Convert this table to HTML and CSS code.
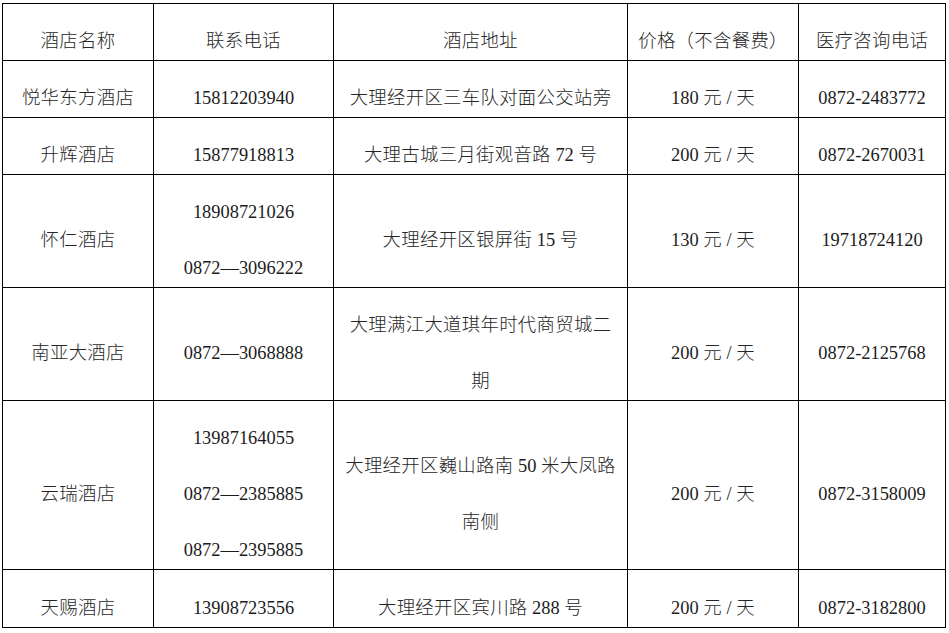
FILE: index.html
```html
<!DOCTYPE html>
<html lang="zh-CN">
<head>
<meta charset="utf-8">
<title>酒店信息</title>
<link rel="stylesheet" href="styles.css">
</head>
<body>
<table class="hotels">
  <colgroup>
    <col class="c1"><col class="c2"><col class="c3"><col class="c4"><col class="c5">
  </colgroup>
  <tr>
    <td><div class="t">酒店名称</div></td>
    <td><div class="t">联系电话</div></td>
    <td><div class="t">酒店地址</div></td>
    <td><div class="t">价格（不含餐费）</div></td>
    <td><div class="t">医疗咨询电话</div></td>
  </tr>
  <tr>
    <td><div class="t">悦华东方酒店</div></td>
    <td><div class="t"><span class="n">15812203940</span></div></td>
    <td><div class="t">大理经开区三车队对面公交站旁</div></td>
    <td><div class="t"><span class="n">180 </span>元<span class="n"> / </span>天</div></td>
    <td><div class="t"><span class="n">0872-2483772</span></div></td>
  </tr>
  <tr>
    <td><div class="t">升辉酒店</div></td>
    <td><div class="t"><span class="n">15877918813</span></div></td>
    <td><div class="t">大理古城三月街观音路<span class="n"> 72 </span>号</div></td>
    <td><div class="t"><span class="n">200 </span>元<span class="n"> / </span>天</div></td>
    <td><div class="t"><span class="n">0872-2670031</span></div></td>
  </tr>
  <tr>
    <td><div class="t">怀仁酒店</div></td>
    <td><div class="t"><span class="n">18908721026<br>0872—3096222</span></div></td>
    <td><div class="t">大理经开区银屏街<span class="n"> 15 </span>号</div></td>
    <td><div class="t"><span class="n">130 </span>元<span class="n"> / </span>天</div></td>
    <td><div class="t"><span class="n">19718724120</span></div></td>
  </tr>
  <tr>
    <td><div class="t">南亚大酒店</div></td>
    <td><div class="t"><span class="n">0872—3068888</span></div></td>
    <td><div class="t">大理满江大道琪年时代商贸城二<br>期</div></td>
    <td><div class="t"><span class="n">200 </span>元<span class="n"> / </span>天</div></td>
    <td><div class="t"><span class="n">0872-2125768</span></div></td>
  </tr>
  <tr>
    <td><div class="t">云瑞酒店</div></td>
    <td><div class="t"><span class="n">13987164055<br>0872—2385885<br>0872—2395885</span></div></td>
    <td><div class="t">大理经开区巍山路南<span class="n"> 50 </span>米大凤路<br>南侧</div></td>
    <td><div class="t"><span class="n">200 </span>元<span class="n"> / </span>天</div></td>
    <td><div class="t"><span class="n">0872-3158009</span></div></td>
  </tr>
  <tr class="last">
    <td><div class="t">天赐酒店</div></td>
    <td><div class="t"><span class="n">13908723556</span></div></td>
    <td><div class="t">大理经开区宾川路<span class="n"> 288 </span>号</div></td>
    <td><div class="t"><span class="n">200 </span>元<span class="n"> / </span>天</div></td>
    <td><div class="t"><span class="n">0872-3182800</span></div></td>
  </tr>
</table>
</body>
</html>
```
FILE: styles.css
```css
html, body {
  margin: 0;
  padding: 0;
  background: #ffffff;
}
body {
  padding: 3px 0 0 2px;
}
.hotels {
  border-collapse: collapse;
  table-layout: fixed;
  width: 943px;
  font-family: "Liberation Serif", "Noto Sans CJK SC", serif;
  font-size: 18.4px;
  font-weight: 300;
  color: #262626;
}
.c1 { width: 151px; }
.c2 { width: 180px; }
.c3 { width: 294px; }
.c4 { width: 171px; }
.c5 { width: 147px; }
.hotels td {
  border: 1.5px solid #000;
  padding: 0;
  text-align: center;
  vertical-align: middle;
  letter-spacing: 0.3px;
  overflow: hidden;
}
.t {
  line-height: 56px;
  transform: translateY(9px);
  white-space: nowrap;
}
.n {
  letter-spacing: 0;
  font-weight: 400;
  color: #1c1c1c;
}
.last td {
  height: 57px;
}
```
